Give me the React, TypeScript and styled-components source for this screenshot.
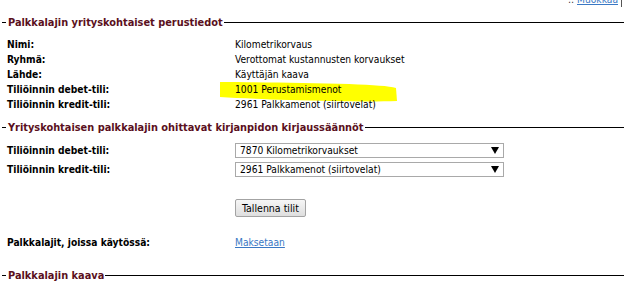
import styled, { createGlobalStyle } from 'styled-components';

const GlobalStyle = createGlobalStyle`
    html, body {
        margin: 0;
        padding: 0;
        background: #fff;
    }
    body {
        font-family: "DejaVu Sans Condensed", "DejaVu Sans", Verdana, sans-serif;
        font-size: 10.2px;
        color: #000;
        overflow: hidden;
    }
`;

const Page = styled.div`
    width: 624px;
    height: 288px;
    overflow: hidden;
`;

const TopBar = styled.div`
    display: flex;
    justify-content: flex-end;
    margin-top: -7px;
    height: 14px;
    line-height: 14px;
    padding-right: 2px;
`;

const EditLinks = styled.span`
    color: #333;
    padding-right: 3px;
    border-right: 1px solid #555;
`;

const Link = styled.a`
    color: #3a78c4;
    text-decoration: underline;
    cursor: pointer;
`;

const Legend = styled.div<{ $top: number }>`
    display: flex;
    align-items: center;
    height: 15px;
    margin-top: ${p => p.$top}px;
    padding-left: 2px;
    font-size: 10.9px;

    &::before {
        content: '';
        width: 4px;
        border-top: 1px solid #000;
        margin-right: 2px;
    }

    &::after {
        content: '';
        flex: 1;
        border-top: 1px solid #000;
        margin-left: 1px;
    }
`;

const LegendText = styled.span`
    font-weight: bold;
    color: #5a1020;
`;

const InfoList = styled.div`
    position: relative;
    margin-top: 7px;
`;

const Row = styled.div<{ $top?: number }>`
    display: flex;
    align-items: center;
    padding-left: 7px;
    line-height: 15px;
    margin-top: ${p => p.$top ?? 0}px;
    position: relative;
    z-index: 1;
`;

const Label = styled.div`
    width: 228px;
    font-weight: bold;
`;

const Value = styled.div``;

const Highlight = styled.svg`
    position: absolute;
    left: 219px;
    top: 44px;
    z-index: 0;
`;

const SelectBox = styled.div`
    position: relative;
    width: 269px;
    height: 15px;
    box-sizing: border-box;
    border: 1px solid #a9a9a9;
    background: #fff;
    display: flex;
    align-items: center;

    &::after {
        content: '';
        position: absolute;
        right: 4px;
        top: 3px;
        border-left: 4px solid transparent;
        border-right: 4px solid transparent;
        border-top: 7px solid #000;
    }
`;

const Select = styled.select`
    appearance: none;
    border: none;
    outline: none;
    background: transparent;
    font: inherit;
    color: #000;
    width: 100%;
    height: 13px;
    line-height: 13px;
    padding: 0 0 0 4px;
    margin: 0;
`;

const ButtonRow = styled.div`
    padding-left: 235px;
    margin-top: 22px;
`;

const Button = styled.button`
    height: 18px;
    padding: 0 6px;
    font: inherit;
    font-size: 10.5px;
    color: #000;
    border: 1px solid #a3a3a3;
    border-radius: 2px;
    background: linear-gradient(#f6f6f6, #dedede);
    line-height: 14px;
    cursor: pointer;
`;

const info: [string, string][] = [
    ['Nimi:', 'Kilometrikorvaus'],
    ['Ryhmä:', 'Verottomat kustannusten korvaukset'],
    ['Lähde:', 'Käyttäjän kaava'],
    ['Tiliöinnin debet-tili:', '1001 Perustamismenot'],
    ['Tiliöinnin kredit-tili:', '2961 Palkkamenot (siirtovelat)'],
];

const App = () => {
    return (
        <Page>
            <GlobalStyle />
            <TopBar>
                <EditLinks>:: <Link>Muokkaa</Link></EditLinks>
            </TopBar>

            <Legend $top={8}><LegendText>Palkkalajin yrityskohtaiset perustiedot</LegendText></Legend>
            <InfoList>
                <Highlight width="180" height="22" viewBox="0 0 180 22">
                    <path
                        d="M1,1 C40,1 90,2 130,3 C155,4 170,5 177,7 L178,20 C150,21 110,20 70,19 C40,18 18,17 1,16 Z"
                        fill="#ffff00"
                    />
                </Highlight>
                {info.map(([label, value]) => (
                    <Row key={label}>
                        <Label>{label}</Label>
                        <Value>{value}</Value>
                    </Row>
                ))}
            </InfoList>

            <Legend $top={8}><LegendText>Yrityskohtaisen palkkalajin ohittavat kirjanpidon kirjaussäännöt</LegendText></Legend>
            <Row $top={8}>
                <Label>Tiliöinnin debet-tili:</Label>
                <SelectBox>
                    <Select defaultValue="7870">
                        <option value="7870">7870 Kilometrikorvaukset</option>
                    </Select>
                </SelectBox>
            </Row>
            <Row $top={4}>
                <Label>Tiliöinnin kredit-tili:</Label>
                <SelectBox>
                    <Select defaultValue="2961">
                        <option value="2961">2961 Palkkamenot (siirtovelat)</option>
                    </Select>
                </SelectBox>
            </Row>
            <ButtonRow>
                <Button>Tallenna tilit</Button>
            </ButtonRow>
            <Row $top={18}>
                <Label>Palkkalajit, joissa käytössä:</Label>
                <Value><Link>Maksetaan</Link></Value>
            </Row>

            <Legend $top={18}><LegendText>Palkkalajin kaava</LegendText></Legend>
        </Page>
    );
};

export default App;
